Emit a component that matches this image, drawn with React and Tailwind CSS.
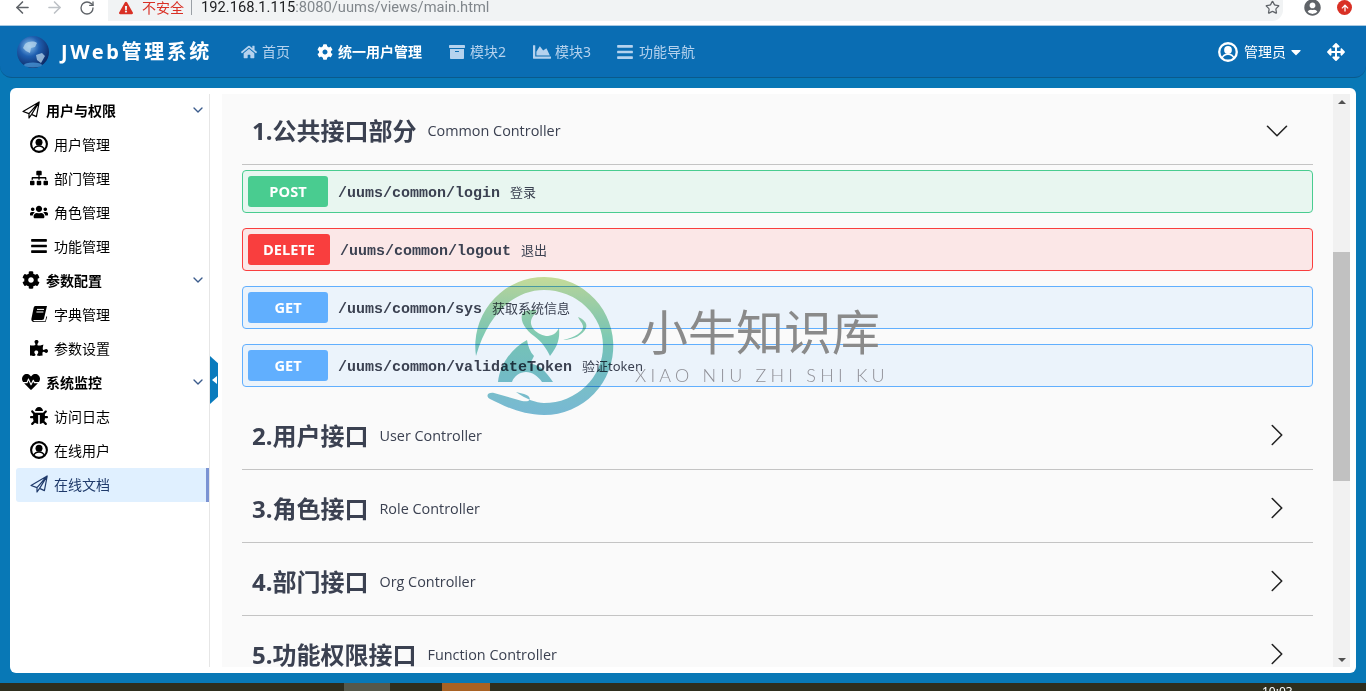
import React from "react";
import { ArrowLeft, ArrowRight, RotateCw, Star, ChevronDown, ChevronRight } from "lucide-react";
import {
  FaHome,
  FaCog,
  FaArchive,
  FaChartArea,
  FaBars,
  FaCaretDown,
  FaArrowsAlt,
  FaSitemap,
  FaUsers,
  FaPuzzlePiece,
  FaHeartbeat,
  FaBug,
  FaUserCircle,
  FaExclamationTriangle,
  FaArrowUp,
} from "react-icons/fa";

const cjk = "font-['Noto_Sans','Noto_Sans_CJK_SC',sans-serif]";

// font-awesome 4 outline glyphs, react-icons only has the newer shapes
const UserRing = ({ size = 18 }) => (
  <svg width={size} height={size} viewBox="0 0 18 18" className="shrink-0">
    <circle cx="9" cy="9" r="7.9" fill="none" stroke="currentColor" strokeWidth="2.1" />
    <circle cx="9" cy="7.2" r="3.5" fill="currentColor" />
    <path d="M3.6 14.6C4.6 12 6.5 11 9 11s4.4 1 5.4 3.6" fill="none" stroke="currentColor" strokeWidth="1.3" />
  </svg>
);

const Plane = ({ size = 18 }) => (
  <svg width={size} height={size} viewBox="0 0 18 18" className="shrink-0">
    <path
      d="M1 10.5 17.2 1 14.4 15.6 9.6 13.4 7 17V12.6L1 10.5ZM17.2 1 7 12.6M17.2 1 9.6 13.4"
      fill="none"
      stroke="currentColor"
      strokeWidth="1.2"
      strokeLinejoin="round"
    />
  </svg>
);

const Book = ({ size = 18 }) => (
  <svg width={size} height={size} viewBox="0 0 18 18" className="shrink-0">
    <path
      d="M5.4 1H17l-3 12.6c-.3 1.2-1 1.4-2 1.4H4.2c-.8 0-1 .4-.8.8.2.3.6.4 1.2.4h10.6l1.2-5 .8.6L15.6 17H4c-1.8 0-3-1.2-2.6-3.2L3.6 3c.3-1.2.8-2 1.8-2Z"
      fill="currentColor"
    />
    <path d="M7 4.4h7M6.4 7h7" stroke="#fff" strokeWidth="1" />
  </svg>
);

const menu = [
  { label: "用户与权限", icon: Plane, group: true },
  { label: "用户管理", icon: UserRing },
  { label: "部门管理", icon: FaSitemap },
  { label: "角色管理", icon: FaUsers },
  { label: "功能管理", icon: FaBars },
  { label: "参数配置", icon: FaCog, group: true },
  { label: "字典管理", icon: Book },
  { label: "参数设置", icon: FaPuzzlePiece },
  { label: "系统监控", icon: FaHeartbeat, group: true },
  { label: "访问日志", icon: FaBug },
  { label: "在线用户", icon: UserRing },
  { label: "在线文档", icon: Plane, active: true },
];

const apis = [
  { method: "POST", path: "/uums/common/login", desc: "登录", box: "border-[#49cc90] bg-[#e8f6f0]", badge: "bg-[#49cc90] w-[80px]" },
  { method: "DELETE", path: "/uums/common/logout", desc: "退出", box: "border-[#f93e3e] bg-[#fbe7e7]", badge: "bg-[#f93e3e] w-[82px]" },
  { method: "GET", path: "/uums/common/sys", desc: "获取系统信息", box: "border-[#61affe] bg-[#ebf3fb]", badge: "bg-[#61affe] w-[80px]" },
  { method: "GET", path: "/uums/common/validateToken", desc: "验证token", box: "border-[#61affe] bg-[#ebf3fb]", badge: "bg-[#61affe] w-[80px]" },
];

const sections = [
  { title: "2.用户接口", sub: "User Controller" },
  { title: "3.角色接口", sub: "Role Controller" },
  { title: "4.部门接口", sub: "Org Controller" },
  { title: "5.功能权限接口", sub: "Function Controller" },
];

const NavLink = ({ icon: Icon, label, active, iconSize = 16, gap = "gap-[5px]", extra = "" }) => (
  <div className={`flex items-center ${gap} ${extra} text-[14px] ${active ? "font-bold text-white" : "text-[#b5d2ee]"}`}>
    <Icon size={iconSize} />
    <span>{label}</span>
  </div>
);

const BrowserBar = () => (
  <div className="flex h-[25px] shrink-0 items-start bg-white text-[#5f6368]">
    <div className="flex h-[15px] w-[108px] items-center">
      <ArrowLeft size={19} className="ml-[13px]" />
      <ArrowRight size={19} className="ml-[13px] text-[#bdc1c6]" />
      <RotateCw size={16} className="ml-[15px]" />
    </div>
    <div className="flex h-[21px] w-[1175px] items-center rounded-br-[11px] bg-[#f1f3f4] pb-[6px] pl-[11px] pr-[3px]">
      <FaExclamationTriangle size={14} className="text-[#d93025]" />
      <span className={`ml-[9px] text-[14px] leading-[15px] text-[#d93025] ${cjk}`}>不安全</span>
      <span className="ml-[7px] h-[15px] w-px bg-[#9aa0a6]" />
      <span className="ml-[9px] font-['Roboto',sans-serif] text-[14.7px] leading-[15px] text-[#202124]">
        192.168.1.115<span className="text-[#80868b]">:8080/uums/views/main.html</span>
      </span>
      <Star size={15} className="ml-auto" />
    </div>
    <div className="flex h-[15px] items-center">
      <FaUserCircle size={17} className="ml-[21px]" />
      <span className="ml-[16px] flex h-[15px] w-[15px] items-center justify-center rounded-full bg-[#d93025]">
        <FaArrowUp size={8} className="text-white" />
      </span>
    </div>
  </div>
);

const Globe = () => (
  <svg width="34" height="34" viewBox="0 0 34 34">
    <defs>
      <radialGradient id="globe" cx="38%" cy="32%" r="70%">
        <stop offset="0%" stopColor="#8fc4ee" />
        <stop offset="45%" stopColor="#1f5fb0" />
        <stop offset="100%" stopColor="#0d2a66" />
      </radialGradient>
    </defs>
    <circle cx="17" cy="17" r="16" fill="url(#globe)" />
    <path d="M9 9c4-3 9-3 12-1l-2 4-4 1-1 5-4-2-3-3zM20 20l6-2 3 3-4 7-4-3z" fill="#b7d5ec" opacity="0.75" />
    <ellipse cx="17" cy="30" rx="9" ry="2.5" fill="#4f9fe0" opacity="0.7" />
  </svg>
);

const Header = () => (
  <div className="flex h-[53px] shrink-0 items-center rounded-b-[12px] border-t border-t-[#a9c9e2] border-b border-b-[#0a5a8c] bg-[#0a6db3] pl-[16px] pr-[21px]">
    <Globe />
    <span className={`ml-[11px] w-[155px] whitespace-nowrap text-[20px] font-bold tracking-[2.6px] text-white ${cjk}`}>JWeb管理系统</span>
    <div className={`ml-[25px] flex items-center gap-[27px] ${cjk}`}>
      <NavLink icon={FaHome} label="首页" />
      <NavLink icon={FaCog} label="统一用户管理" active />
      <NavLink icon={FaArchive} label="模块2" />
      <NavLink icon={FaChartArea} label="模块3" iconSize={18} gap="gap-[4px]" />
      <NavLink icon={FaBars} label="功能导航" iconSize={18} extra="-ml-[2px]" />
    </div>
    <div className={`ml-auto flex items-center text-[14px] text-white ${cjk}`}>
      <UserRing size={20} />
      <span className="ml-[6px]">管理员</span>
      <FaCaretDown size={16} className="ml-[2px]" />
      <FaArrowsAlt size={18} className="ml-[23px]" />
    </div>
  </div>
);

const Sidebar = () => (
  <div className={`relative w-[200px] shrink-0 border-r border-[#e6e6e6] text-[14px] text-black ${cjk}`}>
    {menu.map(({ label, icon: Icon, group, active }) => (
      <div
        key={label + (active ? "-active" : "")}
        className={`flex h-[34px] items-center pb-[2px] ${group ? "pl-[12px] font-bold" : "ml-[6px] pl-[14px]"} ${
          active ? "rounded-l-[3px] border-r-[3px] border-[#7b93d3] bg-[#e0f0ff] pb-0 text-[#1f3a6b]" : ""
        }`}
      >
        <Icon size={18} className="shrink-0" />
        <span className="ml-[6px]">{label}</span>
        {group && <ChevronDown size={16} className="ml-auto mr-[3px] text-[#3b5b8c]" />}
      </div>
    ))}
    <div className="absolute left-[200px] top-[262px] flex h-[48px] w-[8px] items-center justify-center bg-[#0a7bbd] [clip-path:polygon(0_0,100%_15%,100%_85%,0_100%)]">
      <span className="h-0 w-0 border-y-[4px] border-r-[5px] border-y-transparent border-r-white" />
    </div>
  </div>
);

const SectionHead = ({ title, sub, open, first }) => (
  <div className={`flex items-center border-b border-[#c4c4c4] pl-[10px] pr-[17px] ${first ? "h-[71px] pt-[3px]" : "h-[73px] pt-[4px]"}`}>
    <span className={`text-[24px] font-bold leading-[32px] text-[#3b4151] ${first ? "" : "mt-[2px]"}`}>{title}</span>
    <span className={`ml-[11px] font-['Open_Sans',sans-serif] text-[14.4px] text-[#3b4151] ${first ? "" : "mt-[2px]"}`}>{sub}</span>
    {open ? (
      <ChevronDown size={38} strokeWidth={1} className="ml-auto text-[#222]" />
    ) : (
      <ChevronRight size={38} strokeWidth={1} className="ml-auto text-[#222]" />
    )}
  </div>
);

const ApiRow = ({ method, path, desc, box, badge }) => (
  <div className={`flex h-[43px] items-center rounded-[4px] border pl-[5px] ${box}`}>
    <div className={`flex h-[31px] items-center justify-center rounded-[3px] font-['Open_Sans',sans-serif] text-[14.6px] font-bold text-white ${badge}`}>
      {method}
    </div>
    <span className="ml-[10px] mt-[6px] font-['Liberation_Mono',monospace] text-[15px] font-bold text-[#3b4151]">{path}</span>
    <span className="ml-[10px] mt-[2px] text-[13px] text-[#3b4151]">{desc}</span>
  </div>
);

const Watermark = () => (
  <div className={`pointer-events-none absolute left-[470px] top-[272px] flex ${cjk}`}>
    <svg width="150" height="150" viewBox="0 0 150 150" className="shrink-0 mix-blend-multiply">
      <defs>
        <linearGradient id="wm" gradientUnits="userSpaceOnUse" x1="0" y1="5" x2="0" y2="143">
          <stop offset="0%" stopColor="#c8e09c" />
          <stop offset="45%" stopColor="#7fcdb8" />
          <stop offset="100%" stopColor="#79bcd8" />
        </linearGradient>
      </defs>
      <path
        fill="url(#wm)"
        d="M6 84A69 69 0 1 1 74 143C52 143 34 134 20 127 15 124 18 120 24 121L52 129C62 131 62 124 54 122L46 120C56 127 66 131 74 131A59 57 0 0 0 133 74 59 56 0 0 0 74 18C44 18 18 42 6 84Z"
      />
      <path
        fill="url(#wm)"
        d="M28 110C30 92 42 76 57 68 58 74 60 80 64 84L60 92C70 92 76 100 83 110H72C68 104 62 100 56 100 50 100 44 104 42 110Z"
      />
      <path
        fill="url(#wm)"
        d="M52 42C50 50 56 58 64 64 72 70 76 76 80 84 88 74 90 66 89 56 86 62 82 64 76 64 66 62 58 54 62 46 64 42 68 40 66 38 60 38 54 38 52 42Z"
      />
      <path fill="url(#wm)" d="M93 68C104 66 114 60 113 54 112 50 109 48 108 45 113 47 118 51 116 56 113 63 103 68 93 68Z" />
    </svg>
    <div className="ml-[20px] mt-[30px] flex flex-col text-[#8a8a8a]">
      <span className="whitespace-nowrap text-[48px] font-normal leading-[60px]">小牛知识库</span>
      <span className="-ml-[5px] mt-[3px] whitespace-nowrap font-['Lato',sans-serif] text-[18px] font-light leading-[20px] tracking-[4.2px] text-[#8f8f96]">
        XIAO NIU ZHI SHI KU
      </span>
    </div>
  </div>
);

const Scrollbar = () => (
  <div className="flex w-[17px] shrink-0 flex-col items-center bg-[#f1f1f1]">
    <span className="mt-[6px] h-0 w-0 border-x-[4px] border-b-[4px] border-x-transparent border-b-[#505050]" />
    <div className="mt-[148px] h-[229px] w-full bg-[#c1c1c1]" />
    <span className="mt-auto mb-[5px] h-0 w-0 border-x-[4px] border-t-[4px] border-x-transparent border-t-[#505050]" />
  </div>
);

export default function App() {
  return (
    <div className={`relative flex h-[691px] w-[1366px] flex-col overflow-hidden bg-[#0878b6] ${cjk}`}>
      <BrowserBar />
      <Header />
      <div className="flex-1 p-[10px]">
        <div className="flex h-[585px] rounded-[6px] bg-white py-[6px] pr-[6px]">
          <Sidebar />
          <div className="ml-[12px] flex min-w-0 flex-1">
            <div className="min-w-0 flex-1 overflow-hidden bg-[#fafafa] px-[20px]">
              <SectionHead title="1.公共接口部分" sub="Common Controller" open first />
              <div className="flex flex-col gap-[15px] pb-[10px] pt-[5px]">
                {apis.map((api) => (
                  <ApiRow key={api.path} {...api} />
                ))}
              </div>
              {sections.map((s) => (
                <SectionHead key={s.title} {...s} />
              ))}
            </div>
            <Scrollbar />
          </div>
        </div>
      </div>
      <div className="flex h-[8px] shrink-0 overflow-hidden bg-[#2e2e1e]">
        <div className="ml-[344px] w-[46px] bg-[#55584a]" />
        <div className="ml-[52px] w-[48px] bg-[#a86224]" />
        <span className="ml-[772px] pt-[2px] text-[12px] leading-[14px] text-white">10:03</span>
      </div>
      <Watermark />
    </div>
  );
}
